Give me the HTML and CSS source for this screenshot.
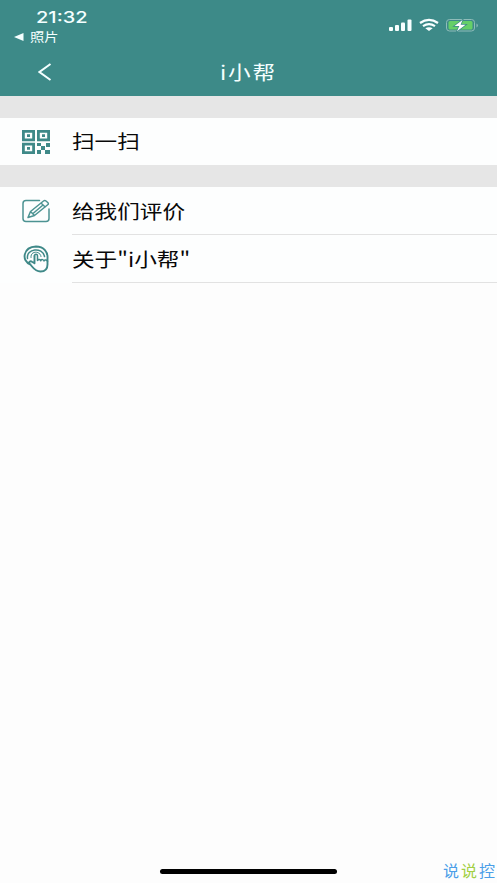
FILE: index.html
```html
<!DOCTYPE html>
<html lang="zh-CN">
<head>
<meta charset="utf-8">
<title>i小帮</title>
<link rel="stylesheet" href="styles.css">
</head>
<body>
<div class="screen">
  <header class="header">
    <div class="status">
      <div class="status-left">
        <div class="time"><span class="wide">21:32</span></div>
        <div class="return"><svg width="10" height="8" viewBox="0 0 10 8"><path d="M0 4 9.5 0v8z" fill="#f4ffff"/></svg><span class="wide">照片</span></div>
      </div>
      <svg class="status-icons" width="92" height="20" viewBox="0 0 92 20">
        <g fill="#f8ffff">
          <rect x="1" y="12" width="4" height="4" rx="1"/><rect x="7" y="10" width="4" height="6" rx="1"/><rect x="13" y="7.500" width="4" height="8.500" rx="1"/><rect x="19.500" y="4.500" width="4" height="11.500" rx="1"/>
          <path d="m41 16-3.700-2.800q3.700-2 7.400 0z"/>
        </g>
        <path d="M32 8q9-6.400 18 0M35 11.200q6-4 12 0" fill="none" stroke="#f8ffff" stroke-width="2.200"/>
        <rect x="58.500" y="4.500" width="28" height="11.500" rx="3" fill="none" stroke="#8fbcb9"/>
        <rect x="60.500" y="6" width="24" height="8.500" rx="1.500" fill="#65cf68"/>
        <path d="M88.500 8.500v4q1.300-.6 1.300-2t-1.300-2" fill="#8fbcb9"/>
        <path d="m74.500 5-8 6h4.800L69 16.300l8.600-6.500h-5z" fill="#fff" stroke="#3d8a88" stroke-width="1.500" paint-order="stroke"/>
      </svg>
    </div>
    <nav class="nav">
      <svg class="back" width="14" height="18" viewBox="0 0 14 18"><path d="M12.500 1 1.500 9l11 8" fill="none" stroke="#f4ffff" stroke-width="2"/></svg>
      <h1 class="title"><span class="wide">i小帮</span></h1>
    </nav>
  </header>
  <main>
    <section class="group">
      <a class="row scan">
        <svg class="icon" width="28" height="24" viewBox="0 0 28 24">
          <g fill="none" stroke="#3f8988" stroke-width="2.800"><path d="M1.400 1.400h10.200v8.400H1.400zM16.400 1.400h10.200v8.400H16.400zM1.400 14.200h10.200v8.400H1.400z"/></g>
          <path fill="#3f8988" d="M5 4.200h3v2.800H5zM20 4.200h3v2.800h-3zM5 17h3v2.800H5zM15 13h4v3h-4zM24 13h4v4h-4zM19 16h4v4h-4zM15 20h4v4h-4zM23 20h5v4h-5z"/>
        </svg>
        <span class="label"><span class="wide">扫一扫</span></span>
      </a>
    </section>
    <section class="group">
      <a class="row">
        <svg class="icon" width="28" height="24" viewBox="0 0 28 24" fill="none" stroke="#4c9392" stroke-width="1.500" stroke-linejoin="round" stroke-linecap="round">
          <path d="M17.500 1.500H4Q1 1.500 1 4.500v15q0 3 3 3h20q3 0 3-3V10"/>
          <path d="m6 18.500 2.500-6L21.500 2q1.200-1 2.500 0l1.700 1.500q1.300 1.200 0 2.300L12.500 16.500zM8.500 12.500l4 4M19 4l4.200 4M11 14.500 21 6"/>
        </svg>
        <span class="label line"><span class="wide">给我们评价</span></span>
      </a>
      <a class="row">
        <svg class="icon" width="28" height="28" viewBox="0 0 28 28" fill="none" stroke="#3f8988" stroke-linecap="round" stroke-linejoin="round">
          <path stroke-width="1.900" d="M8.500 19.500C-1 16 1 2 14 1.500c8 0 12 5.500 11.500 12v6c0 5-3 7-7 7-4.500 0-6.500-2.500-8.500-5L7.500 18.500c-1-2 1-2.800 2.500-1.800l2.500 1.500V11"/>
          <path stroke-width="1.500" d="M12.500 11c0-2.200 3-2.200 3 0v4.500c.5-1.300 3-1.300 3.300.3v-.5c.8-1.200 3-.8 3.200.7v-.5c1-1 3-.5 3.500.8M5.500 13.500C4 3.500 20.500 1.500 22.500 11.500"/>
          <path stroke-width="1" d="M9 12.500C8 5.500 18.500 5.500 19 11.500"/>
        </svg>
        <span class="label line"><span class="wide">关于"i小帮"</span></span>
      </a>
    </section>
  </main>
  <div class="home"></div>
  <div class="mark"><span>说</span><span class="green">说</span><span>控</span></div>
</div>
</body>
</html>
```
FILE: styles.css
```css
body {
  margin: 0;
  font-family: "Liberation Sans", "Noto Sans CJK SC", sans-serif;
}
.screen {
  position: relative;
  display: flex;
  flex-direction: column;
  height: 883px;
  overflow: hidden;
  background: #fdfdfd;
}
.wide {
  display: inline-block;
  transform: scaleX(1.19);
  transform-origin: left center;
  white-space: nowrap;
}
.header {
  height: 96px;
  background: #3d8a88;
  color: #f4ffff;
}
.status {
  display: flex;
  justify-content: space-between;
  height: 48px;
}
.status-left { padding: 8px 0 0 14px; }
.time {
  padding-left: 22px;
  font: 500 16px/19px Inter, sans-serif;
}
.time .wide { transform: scaleX(1.25); }
.return {
  display: flex;
  align-items: center;
  gap: 6px;
  height: 20px;
  font: 12px/20px "Noto Sans CJK SC", sans-serif;
}
.status-icons { margin: 15px 17px 0 0; }
.nav {
  display: flex;
  align-items: center;
  height: 48px;
  padding-left: 38px;
}
.title {
  margin: -1px 0 0 168px;
  font: 19px/28px "Noto Sans CJK SC", sans-serif;
}
.title .wide { letter-spacing: 1.5px; }
.group {
  border-top: 22px solid #e6e6e6;
  background: #fdfefe;
}
.row {
  display: flex;
  align-items: center;
  height: 48px;
  padding-left: 22px;
}
.scan { height: 47px; }
.icon {
  flex: none;
  width: 28px;
  margin-right: 22px;
}
.label {
  box-sizing: border-box;
  flex: 1;
  height: 100%;
  color: #080808;
  font: 19px/48px "Noto Sans CJK SC", sans-serif;
}
.scan .label { line-height: 46px; }
.line { border-bottom: 1px solid #e2e2e2; }
.home {
  width: 177px;
  height: 5px;
  margin: auto auto 9px 160px;
  border-radius: 3px;
  background: #000;
}
.mark {
  position: absolute;
  right: 2px;
  bottom: 2px;
  display: flex;
  gap: 2px;
  color: #4b9ee8;
  font: 16px/22px "Noto Sans CJK SC", sans-serif;
}
.green { color: #a2cf43; }
```
